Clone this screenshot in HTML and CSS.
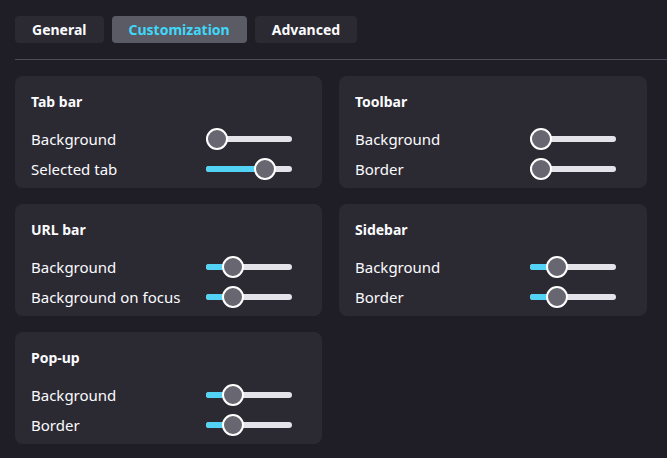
FILE: index.html
```html
<!DOCTYPE html>
<html>
<head>
<meta charset="utf-8">
<link rel="stylesheet" href="styles.css">
</head>
<body>
<div class="page">
  <div class="tabs">
    <div class="tab">General</div>
    <div class="tab active">Customization</div>
    <div class="tab">Advanced</div>
  </div>
  <div class="divider"></div>
  <div class="grid">
    <div class="card">
      <div class="title">Tab bar</div>
      <div class="row"><span class="label">Background</span><div class="slider"><div class="fill" style="width:11px"></div><div class="thumb" style="left:0px"></div></div></div>
      <div class="row"><span class="label">Selected tab</span><div class="slider"><div class="fill" style="width:59px"></div><div class="thumb" style="left:48px"></div></div></div>
    </div>
    <div class="card">
      <div class="title">Toolbar</div>
      <div class="row"><span class="label">Background</span><div class="slider"><div class="fill" style="width:11px"></div><div class="thumb" style="left:0px"></div></div></div>
      <div class="row"><span class="label">Border</span><div class="slider"><div class="fill" style="width:11px"></div><div class="thumb" style="left:0px"></div></div></div>
    </div>
    <div class="card">
      <div class="title">URL bar</div>
      <div class="row"><span class="label">Background</span><div class="slider"><div class="fill" style="width:27px"></div><div class="thumb" style="left:16px"></div></div></div>
      <div class="row"><span class="label">Background on focus</span><div class="slider"><div class="fill" style="width:27px"></div><div class="thumb" style="left:16px"></div></div></div>
    </div>
    <div class="card">
      <div class="title">Sidebar</div>
      <div class="row"><span class="label">Background</span><div class="slider"><div class="fill" style="width:27px"></div><div class="thumb" style="left:16px"></div></div></div>
      <div class="row"><span class="label">Border</span><div class="slider"><div class="fill" style="width:27px"></div><div class="thumb" style="left:16px"></div></div></div>
    </div>
    <div class="card">
      <div class="title">Pop-up</div>
      <div class="row"><span class="label">Background</span><div class="slider"><div class="fill" style="width:27px"></div><div class="thumb" style="left:16px"></div></div></div>
      <div class="row"><span class="label">Border</span><div class="slider"><div class="fill" style="width:27px"></div><div class="thumb" style="left:16px"></div></div></div>
    </div>
  </div>
</div>
</body>
</html>
```

FILE: styles.css
```css
html, body {
  margin: 0;
  padding: 0;
  background: #1f1e26;
  color: #fbfbfe;
  font-family: "Noto Sans", "Open Sans", sans-serif;
}
.page {
  padding: 16px 0 0 15px;
  width: 652px;
  height: 442px;
  overflow: hidden;
}
.tabs {
  display: flex;
  gap: 8px;
}
.tab {
  height: 27px;
  line-height: 27px;
  padding: 0 17px;
  border-radius: 4px;
  background: #2b2a33;
  font-size: 14px;
  font-weight: 700;
}
.tab.active {
  background: #5b5b66;
  color: #40d8f8;
}
.divider {
  height: 1px;
  background: #4c4b55;
  margin: 16px 0 16px 0;
}
.grid {
  display: grid;
  grid-template-columns: 307px 308px;
  column-gap: 17px;
  row-gap: 16px;
}
.card {
  background: #2b2a33;
  border-radius: 8px;
  padding: 16px 16px 3px 16px;
  height: 112px;
  box-sizing: border-box;
}
.title {
  font-size: 14px;
  font-weight: 700;
  line-height: 20px;
  margin-bottom: 12px;
}
.row {
  display: grid;
  grid-template-columns: 175px 86px;
  align-items: center;
  height: 30px;
}
.label {
  font-size: 15px;
  white-space: nowrap;
}
.slider {
  position: relative;
  height: 6px;
  border-radius: 3px;
  background: #e4e3ea;
}
.fill {
  height: 6px;
  border-radius: 3px;
  background: #52d3f5;
}
.thumb {
  position: absolute;
  top: -8px;
  width: 18px;
  height: 18px;
  border: 2px solid #ffffff;
  border-radius: 50%;
  background: #676671;
}
```
